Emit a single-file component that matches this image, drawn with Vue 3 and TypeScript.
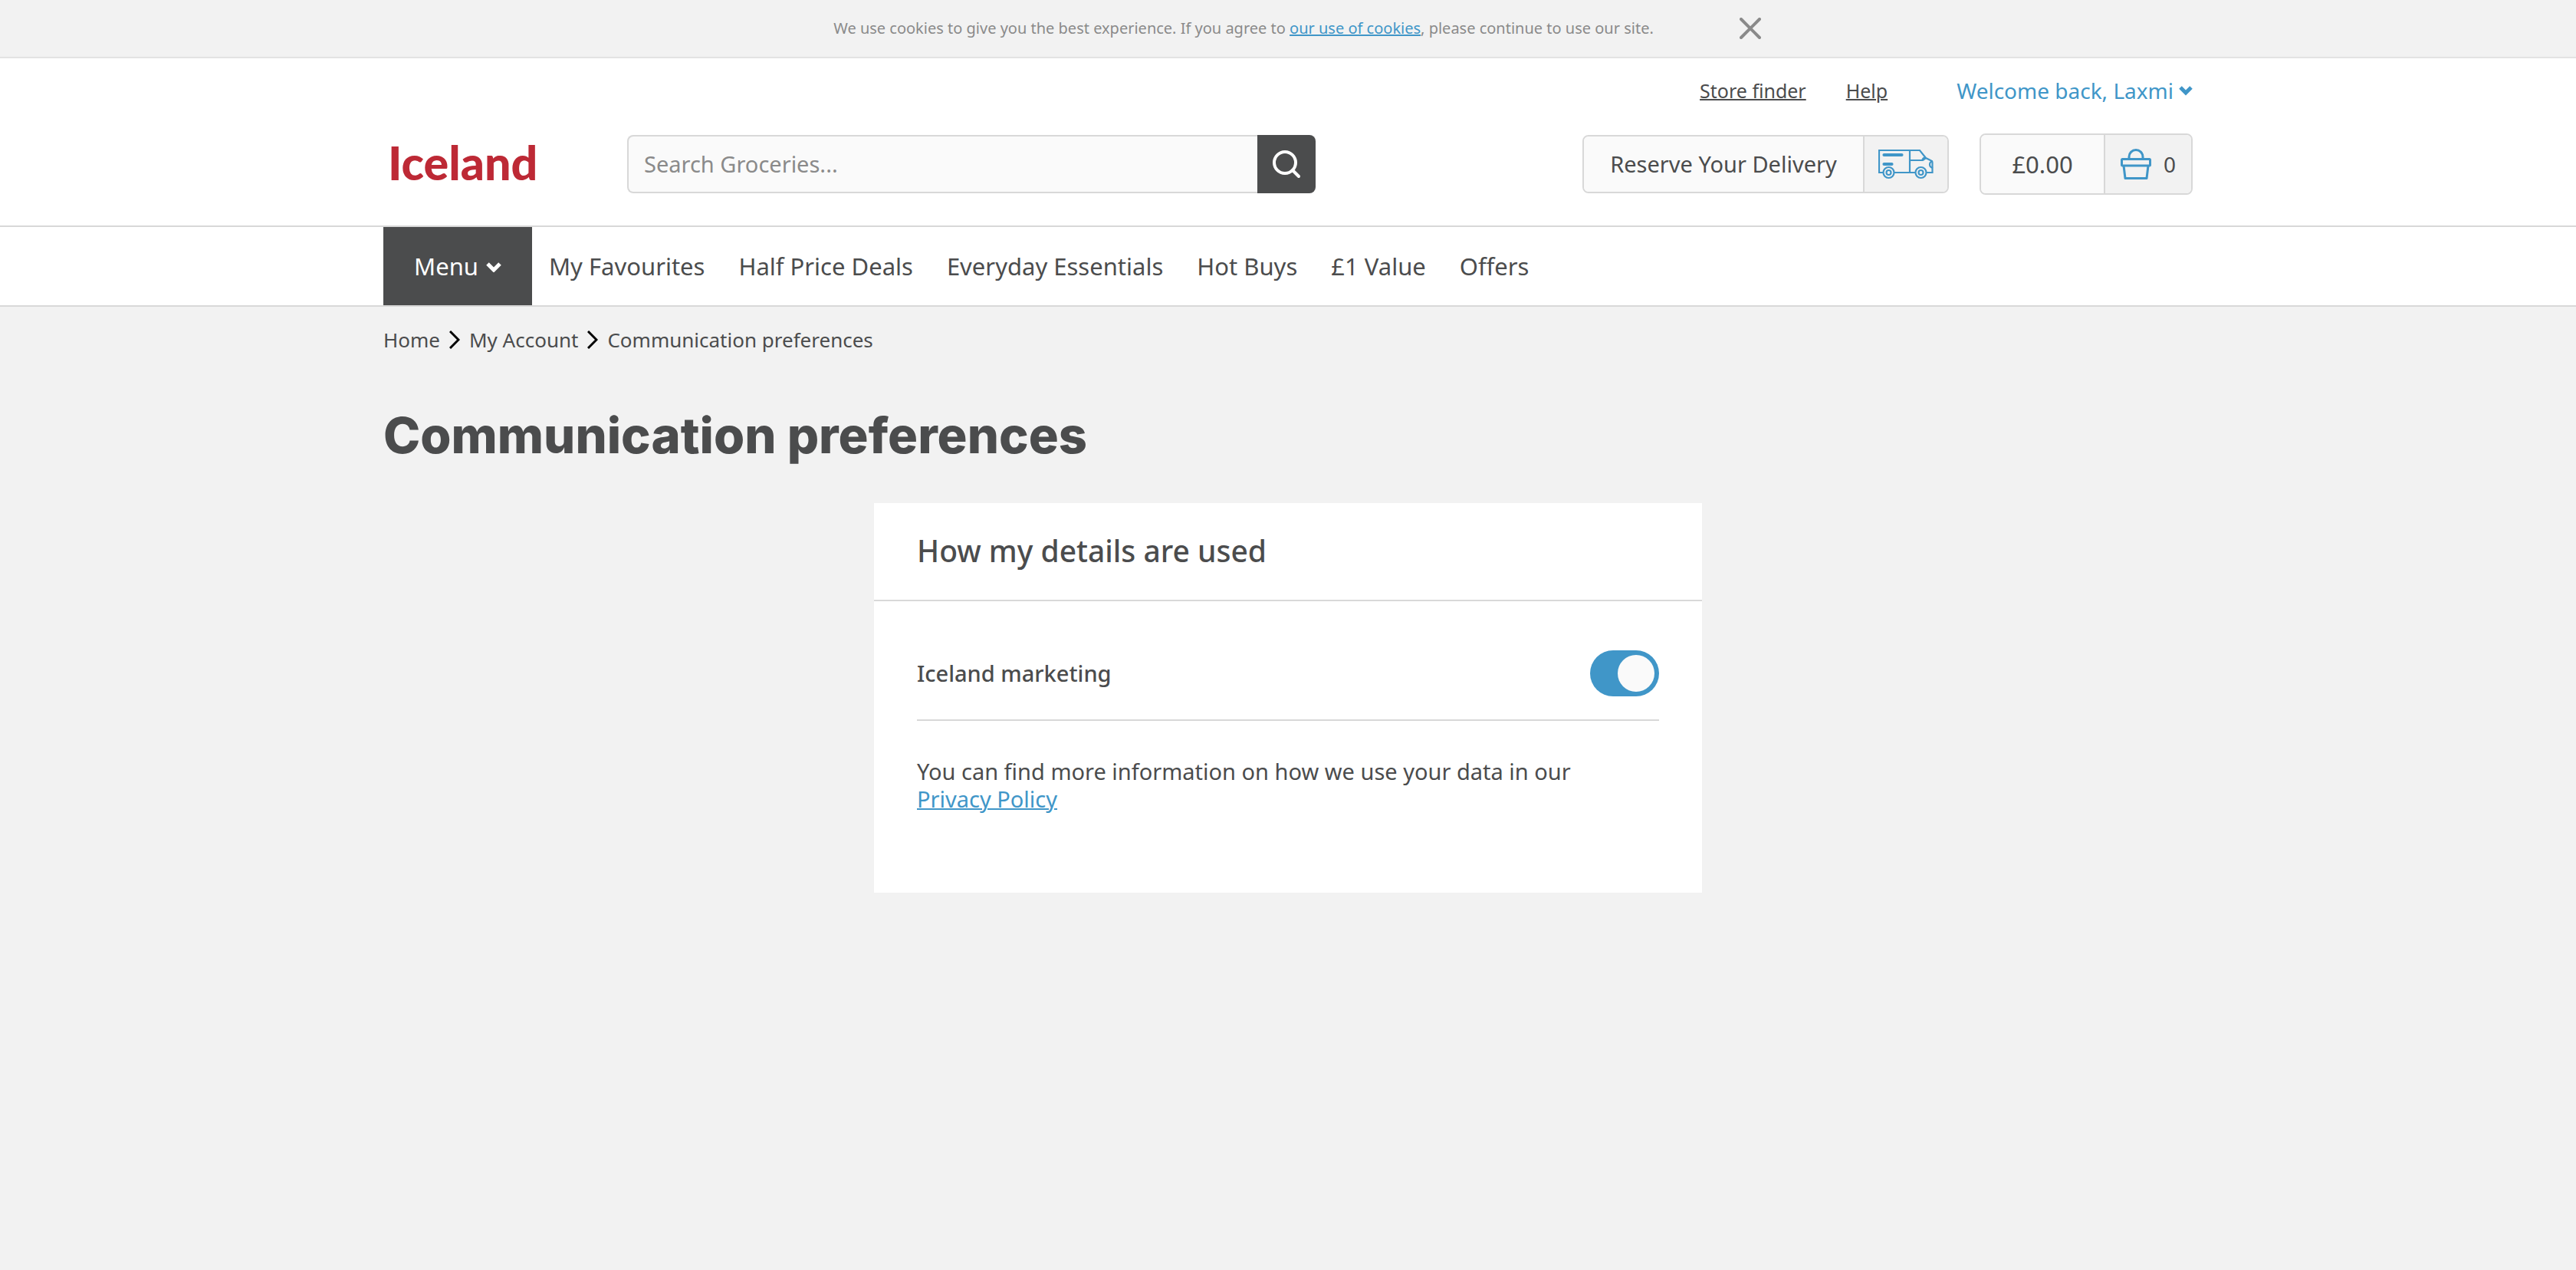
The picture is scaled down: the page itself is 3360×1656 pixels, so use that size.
<script setup lang="ts">
import { ref } from 'vue'

const search = ref('')
const marketing = ref(true)
const cookiesVisible = ref(true)

const navLinks: string[] = [
  'My Favourites',
  'Half Price Deals',
  'Everyday Essentials',
  'Hot Buys',
  '£1 Value',
  'Offers',
]
const trail: string[] = ['Home', 'My Account']
</script>

<template>
  <div class="page">
    <aside v-if="cookiesVisible" class="cookie-bar" aria-label="Cookie notice">
      <p class="cookie-text">
        We use cookies to give you the best experience. If you agree to
        <a href="#cookies">our use of cookies</a>, please continue to use our site.
      </p>
      <button class="cookie-close" type="button" aria-label="Close" @click="cookiesVisible = false">
        <svg width="28" height="28" viewBox="0 0 28 28" aria-hidden="true">
          <path d="M2 2 26 26M26 2 2 26" fill="none" stroke="currentColor" stroke-width="4" stroke-linecap="round" />
        </svg>
      </button>
    </aside>

    <header class="site-header">
      <div class="container">
        <div class="top-links">
          <a class="plain-link" href="#stores">Store finder</a>
          <a class="plain-link" href="#help">Help</a>
          <button class="account" type="button">
            Welcome back, Laxmi
            <svg width="18" height="16" viewBox="0 0 18 16" aria-hidden="true">
              <path d="M2 4 9 11 16 4" fill="none" stroke="currentColor" stroke-width="5" />
            </svg>
          </button>
        </div>

        <div class="main-row">
          <a class="logo" href="#home">Iceland</a>

          <form class="search" role="search" @submit.prevent>
            <input v-model="search" type="text" placeholder="Search Groceries..." aria-label="Search groceries" />
            <button type="submit" aria-label="Search">
              <svg width="40" height="40" viewBox="0 0 40 40" aria-hidden="true">
                <circle cx="18" cy="18" r="14" fill="none" stroke="currentColor" stroke-width="4" />
                <path d="M28 28 36 36" fill="none" stroke="currentColor" stroke-width="4" stroke-linecap="round" />
              </svg>
            </button>
          </form>

          <button class="split delivery" type="button">
            <span class="split-main">Reserve Your Delivery</span>
            <span class="split-side">
              <svg width="72" height="40" viewBox="0 0 72 40" fill="none" stroke="currentColor" stroke-width="2.200" aria-hidden="true">
                <path d="M6 31H1V2H54L62 12 68 15Q70.500 16 70.500 18V31H63M48 31H21" />
                <path d="M41 2V31M41 15H58L62 12M57 15Q58 12 61 11" />
                <path d="M71 16Q67 17 67 20.500T71 25" />
                <rect x="6.500" y="7" width="25" height="2" rx="1" fill="#6fb1d8" />
                <rect x="6.500" y="19" width="12" height="2" rx="1" fill="#6fb1d8" />
                <circle cx="13.500" cy="31" r="7" />
                <circle cx="13.500" cy="31" r="3" />
                <circle cx="55.500" cy="31" r="7" />
                <circle cx="55.500" cy="31" r="3" />
              </svg>
            </span>
          </button>

          <button class="split basket" type="button">
            <span class="split-main">£0.00</span>
            <span class="split-side">
              <svg width="40" height="40" viewBox="0 0 40 40" fill="none" stroke="currentColor" stroke-width="3" aria-hidden="true">
                <path d="M11 13V10.500A9 9 0 0 1 29 10.500V13" />
                <rect x="1.500" y="13.500" width="37" height="8.500" rx="1" />
                <path d="M4 22 6 38.500H34L36 22" stroke-linejoin="round" />
              </svg>
              <span class="count">0</span>
            </span>
          </button>
        </div>
      </div>
    </header>

    <nav class="site-nav" aria-label="Main">
      <div class="container nav-row">
        <button class="menu" type="button">
          Menu
          <svg width="20" height="16" viewBox="0 0 20 16" aria-hidden="true">
            <path d="M2 5 10 13 18 5" fill="none" stroke="currentColor" stroke-width="5" />
          </svg>
        </button>
        <a v-for="link in navLinks" :key="link" class="nav-link" href="#shop">{{ link }}</a>
      </div>
    </nav>

    <main class="container">
      <nav class="breadcrumb" aria-label="Breadcrumb">
        <template v-for="step in trail" :key="step">
          <a href="#step">{{ step }}</a>
          <svg width="14" height="24" viewBox="0 0 14 24" aria-hidden="true">
            <path d="M1 1 12 12 1 23" fill="none" stroke="#000" stroke-width="3" />
          </svg>
        </template>
        <span aria-current="page">Communication preferences</span>
      </nav>

      <h1>Communication preferences</h1>

      <section class="card">
        <h2>How my details are used</h2>
        <div class="card-body">
          <div class="setting">
            <label for="marketing">Iceland marketing</label>
            <input id="marketing" v-model="marketing" class="toggle" type="checkbox" role="switch" />
          </div>
          <p class="info">
            You can find more information on how we use your data in our<br />
            <a href="#privacy">Privacy Policy</a>
          </p>
        </div>
      </section>
    </main>
  </div>
</template>

<style>
body {
  background: #f2f2f2;
}
</style>

<style scoped>
.page {
  --ink: #4b4c4d;
  --blue: #4096c8;
  --grey: #8a8a8a;
  --line: #d8d8d8;
  color: var(--ink);
  font-family: "Noto Sans", "Open Sans", sans-serif;
  font-size: 29px;
  line-height: 36px;
}
.page *,
.page *::before {
  box-sizing: border-box;
}
a {
  color: inherit;
  text-decoration: none;
}
button {
  margin: 0;
  padding: 0;
  border: 0;
  background: none;
  color: inherit;
  font: inherit;
  cursor: pointer;
}
svg {
  display: block;
  flex: none;
}
.container {
  max-width: 2360px;
  margin: 0 auto;
}

.cookie-bar {
  display: flex;
  justify-content: center;
  align-items: center;
  gap: 112px;
  height: 76px;
  padding-left: 24px;
  border-bottom: 2px solid #e3e3e3;
  color: var(--grey);
  font-size: 20px;
}
.cookie-text {
  margin: 0;
}
.cookie-text a,
.info a {
  color: var(--blue);
  text-decoration: underline;
  text-decoration-thickness: 2px;
}

.site-header {
  padding: 24px 0 40px;
  border-bottom: 2px solid var(--line);
  background: #fff;
}
.top-links {
  display: flex;
  justify-content: flex-end;
  font-size: 25px;
}
.plain-link {
  margin-right: 52px;
  text-decoration: underline;
  text-decoration-thickness: 2px;
}
.account {
  display: flex;
  align-items: center;
  gap: 7px;
  margin-left: 38px;
  color: var(--blue);
  font-size: 28px;
}
.main-row {
  display: flex;
  align-items: center;
  height: 80px;
  margin-top: 38px;
}
.logo {
  width: 318px;
  padding: 0 0 4px 6px;
  color: #bd2935;
  font-family: Lato, sans-serif;
  font-size: 61px;
  font-weight: 900;
  line-height: 76px;
}
.search {
  display: flex;
  flex: 0 1 898px;
  height: 76px;
}
.search input {
  flex: 1;
  min-width: 0;
  padding: 0 20px;
  border: 2px solid var(--line);
  border-right: 0;
  border-radius: 8px 0 0 8px;
  outline: 0;
  background: #fafafa;
  color: var(--ink);
  font: inherit;
}
.search input::placeholder {
  color: var(--grey);
  opacity: 1;
}
.search button {
  display: grid;
  place-items: center;
  width: 76px;
  border-radius: 0 8px 8px 0;
  background: var(--ink);
  color: #fff;
}
.split {
  display: flex;
  overflow: hidden;
  border: 2px solid var(--line);
  border-radius: 8px;
}
.split-main,
.split-side {
  display: flex;
  justify-content: center;
  align-items: center;
}
.split-main {
  flex: 1;
  background: #fafafa;
}
.split-side {
  border-left: 2px solid var(--line);
  background: #f2f2f2;
  color: var(--blue);
}
.delivery {
  width: 478px;
  height: 76px;
  margin-left: auto;
}
.delivery .split-side {
  width: 110px;
}
.basket {
  width: 278px;
  height: 80px;
  margin-left: 40px;
  font-size: 31px;
}
.basket .split-side {
  gap: 16px;
  width: 114px;
}
.count {
  color: var(--ink);
  font-size: 28px;
}

.site-nav {
  border-bottom: 2px solid var(--line);
  background: #fff;
  font-size: 31px;
}
.nav-row {
  display: flex;
  height: 102px;
}
.menu {
  display: flex;
  justify-content: center;
  align-items: center;
  gap: 10px;
  width: 194px;
  background: var(--ink);
  color: #fff;
}
.nav-link {
  display: flex;
  align-items: center;
  padding: 0 22px;
}

.breadcrumb {
  display: flex;
  align-items: center;
  gap: 12px;
  padding-top: 25px;
  font-size: 26px;
}
h1 {
  margin: 67px 0 48px;
  font-family: Inter, "Liberation Sans", sans-serif;
  font-size: 65px;
  font-weight: 800;
  line-height: 80px;
}
.card {
  max-width: 1080px;
  margin: 0 auto;
  background: #fff;
}
h2 {
  margin: 0;
  padding: 35px 56px 37px;
  border-bottom: 2px solid var(--line);
  font-size: 39px;
  font-weight: 500;
  line-height: 54px;
}
.card-body {
  padding: 64px 56px 104px;
}
.setting {
  display: flex;
  justify-content: space-between;
  align-items: center;
  padding-bottom: 30px;
  border-bottom: 2px solid var(--line);
  font-weight: 500;
}
.toggle {
  width: 90px;
  height: 60px;
  margin: 0;
  padding: 6px;
  border-radius: 30px;
  background: var(--line);
  appearance: none;
  cursor: pointer;
}
.toggle::before {
  display: block;
  width: 48px;
  height: 48px;
  border-radius: 50%;
  background: #fafafa;
  content: "";
}
.toggle:checked {
  background: var(--blue);
}
.toggle:checked::before {
  margin-left: auto;
}
.info {
  margin: 48px 0 0;
}
</style>
